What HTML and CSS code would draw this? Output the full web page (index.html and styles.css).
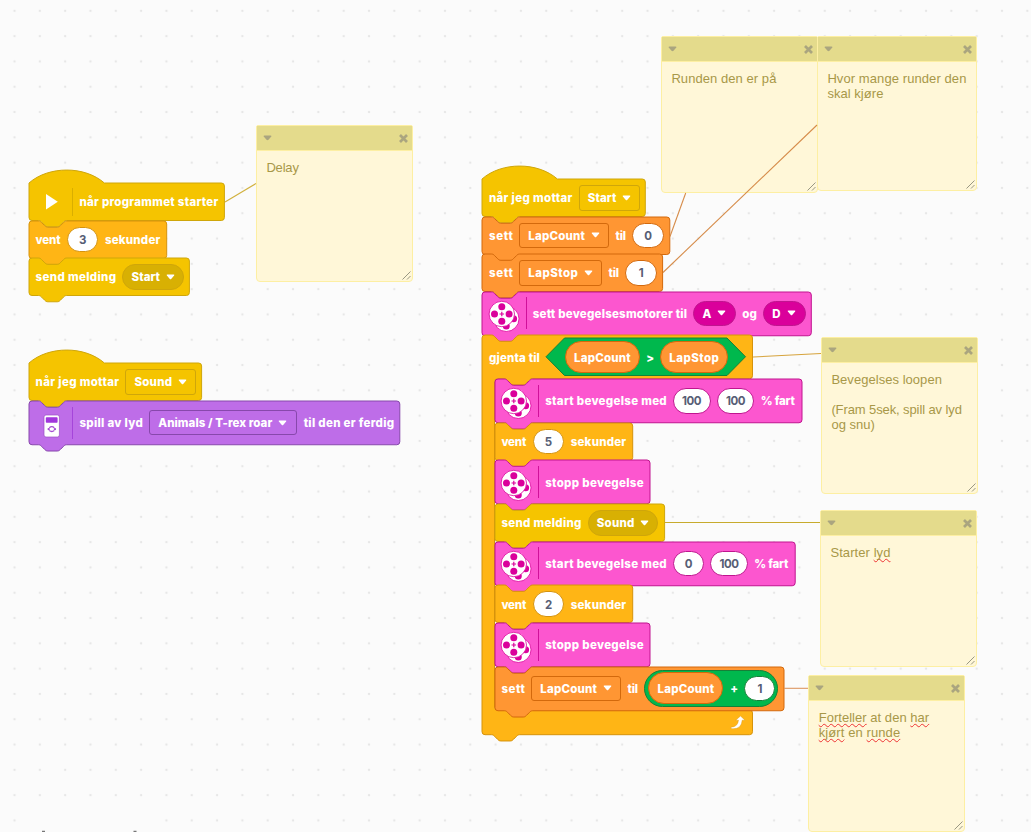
FILE: index.html
```html
<!DOCTYPE html>
<html lang="no">
<head>
<meta charset="utf-8">
<title>Word Blocks</title>
<link rel="stylesheet" href="styles.css">
</head>
<body>
<main class="workspace" id="workspace">
  <svg class="grid" width="1031" height="832">
    <defs>
      <pattern id="dots" width="25.32" height="25.3" patternUnits="userSpaceOnUse" x="1.84" y="-1.8">
        <path d="M11.6 12.65h2.2M12.7 11.55v2.2" stroke="#dedede" stroke-width=".9"/>
      </pattern>
    </defs>
    <rect width="1031" height="832" fill="url(#dots)"/>
    <rect x="30" y="812" width="118" height="20" fill="#fbfbfb"/>
    <path d="M42 831.5h3M133.500 831.5h3" stroke="#777" stroke-width="1.500"/>
  </svg>
</main>
<script src="blocks.js"></script>
</body>
</html>
```
FILE: styles.css
```css
body { margin: 0; background: #fbfbfb; overflow: hidden; }
.workspace { position: relative; width: 1031px; height: 832px; overflow: hidden; font-family: Inter, "Noto Sans", sans-serif; }
.grid, .wires { position: absolute; left: 0; top: 0; }
.wires { z-index: 3; fill: none; stroke-width: 1.1; }
.stack { position: absolute; z-index: 2; display: flex; flex-direction: column; align-items: flex-start; }
.block { position: relative; display: flex; align-items: center; gap: 6.4px; height: 37.5px; padding-left: 6.8px; box-sizing: border-box; color: #fff; white-space: nowrap; }
.block.tall { height: 43.75px; }
.outline { position: absolute; left: 0; top: 0; width: 1px; height: 1px; overflow: visible; stroke-width: 1; }
.loop { position: relative; }
.loop-body { padding-left: 12.500px; display: flex; flex-direction: column; align-items: flex-start; }
.loop-foot { display: flex; height: 24.7px; width: 270.5px; box-sizing: border-box; padding: 6px 6.500px 0 0; justify-content: flex-end; position: relative; }

.events { --fill: #f5c400; --edge: #cfa60a; --dark: #d8b003; --sep: #d9ae00; }
.control { --fill: #ffb515; --edge: #d6930c; }
.variables { --fill: #ff9633; --edge: #d3690c; }
.movement { --fill: #fc56cf; --edge: #c0158f; --dark: #da009b; --sep: #d0109a; }
.sound { --fill: #be6de8; --edge: #8748ac; --sep: #a545da; }
.operators { --fill: #00b84d; --edge: #168038; }
.outline path { fill: var(--fill); stroke: var(--edge); }

.label { flex: none; position: relative; font-size: 11.5px; font-weight: 800; line-height: 16px; padding-top: 1px; text-align: left; }
.icon { flex: none; position: relative; width: 31px; height: 31px; overflow: visible; }
.sep { flex: none; position: relative; width: 1px; height: 32px; margin-right: -.5px; margin-left: -.5px; background: var(--sep); }
.hat .sep { height: 28px; }
.input, .drop, .reporter, .menu { flex: none; position: relative; box-sizing: border-box; display: flex; align-items: center; height: 25.500px; border: 1px solid var(--edge); }
.input { justify-content: center; background: #fff; border-radius: 13px; color: #575e75; }
.input .label { font-weight: 700; }
.drop { border-radius: 3px; padding-left: 8px; gap: 6px; }
.menu { border-radius: 13px; padding-left: 8px; gap: 6px; background: var(--dark); }
.reporter { height: 32px; border-radius: 16px; background: var(--fill); justify-content: center; }
.caret { width: 9px; height: 6px; flex: none; }
.compare { position: relative; flex: none; box-sizing: border-box; display: flex; align-items: center; gap: 6.500px; width: 199.500px; height: 37.500px; padding-left: 18.500px; }
.sum { position: relative; flex: none; box-sizing: border-box; display: flex; align-items: center; gap: 7px; width: 133.500px; height: 37.500px; padding-left: 3px; border: 1px solid var(--edge); border-radius: 19px; background: var(--fill); }

.note { position: absolute; z-index: 1; box-sizing: border-box; display: flex; flex-direction: column; border: 1px solid #fdefa3; border-radius: 2px 2px 4px 4px; background: #fff7d8; }
.note-bar { display: flex; align-items: center; justify-content: space-between; height: 24px; padding: 0 4px 0 6px; background: #e4db8c; border-bottom: 1px solid #fdefa3; }
.note-text { margin: 0; padding: 9px 9.400px; font: 13px/15px "Liberation Sans", Arial, sans-serif; color: #a89848; white-space: pre; }
.note-text span { display: inline-block; height: 15px; }
.typo { text-decoration: underline wavy #e33 1px; text-underline-offset: 1px; text-decoration-skip-ink: none; }
.grip { position: absolute; right: 1px; bottom: 1px; width: 9px; height: 9px; }
```
FILE: blocks.js
```js
const K = 0.785; // zoom level of the workspace
const INDENT = 12.5;
const notchR = `c${[2,0,3,1,4,2].map(n => n*K)}l${4*K},${4*K}c${[1,1,2,2,4,2].map(n => n*K)}h${12*K}c${[2,0,3,-1,4,-2].map(n => n*K)}l${4*K},${-4*K}c${[1,-1,2,-2,4,-2].map(n => n*K)}`;
const notchL = `c${[-2,0,-3,1,-4,2].map(n => n*K)}l${-4*K},${4*K}c${[-1,1,-2,2,-4,2].map(n => n*K)}h${-12*K}c${[-2,0,-3,-1,-4,-2].map(n => n*K)}l${-4*K},${-4*K}c${[-1,-1,-2,-2,-4,-2].map(n => n*K)}`;
const R = 3, N = 12 * K, E = 48 * K;

function outline(w, h, hat) {
  const top = hat
    ? `M0,0c${25*K},${-22*K} ${71*K},${-22*K} ${96*K},0H${w-R}`
    : `M0,${R}Q0,0 ${R},0H${N}${notchR}H${w-R}`;
  return `<svg class="outline"><path d="${top}Q${w},0 ${w},${R}V${h-R}Q${w},${h} ${w-R},${h}H${E}${notchL}H${R}Q0,${h} 0,${h-R}Z"/></svg>`;
}
function loopOutline(w, head, inner, foot) {
  const b = head + inner, t = b + foot, i = INDENT;
  return `<svg class="outline"><path d="M0,${R}Q0,0 ${R},0H${N}${notchR}H${w-R}Q${w},0 ${w},${R}V${head-R}Q${w},${head} ${w-R},${head}H${i+E}${notchL}H${i+R}Q${i},${head} ${i},${head+R}V${b-R}Q${i},${b} ${i+R},${b}H${w-R}Q${w},${b} ${w},${b+R}V${t-R}Q${w},${t} ${w-R},${t}H${E}${notchL}H${R}Q0,${t} 0,${t-R}Z"/></svg>`;
}

const L = (text, w) => `<span class="label" data-w="${w}" style="width:${w}px">${text}</span>`;
const caret = '<svg class="caret" viewBox="0 0 9 6"><path d="M1.300 .5h6.400q1 0 .4.900L5.200 5q-.7.700-1.400 0L.9 1.400Q.3.500 1.300.500Z" fill="#fff"/></svg>';
const drop = (text, tw, w) => `<div class="drop" style="width:${w}px">${L(text, tw)}${caret}</div>`;
const menu = (text, tw, w) => `<div class="menu" style="width:${w}px">${L(text, tw)}${caret}</div>`;
const input = (text, tw, w) => `<div class="input" style="width:${w}px">${L(text, tw)}</div>`;
const reporter = (text, tw, w) => `<div class="reporter variables" style="width:${w}px">${L(text, tw)}</div>`;
const sep = '<i class="sep"></i>';

const wheel = (x, y) => `<circle cx="${x}" cy="${y}" r="12.700" fill="#fff" stroke="#da009b" stroke-width=".8"/><g fill="#da009b"><circle cx="${x}" cy="${y-7.3}" r="3.500"/><circle cx="${x}" cy="${y+7.3}" r="3.500"/><circle cx="${x-7.3}" cy="${y}" r="3.500"/><circle cx="${x+7.3}" cy="${y}" r="3.500"/></g><path d="M${x-2.3} ${y}h4.600M${x} ${y-2.3}v4.600" stroke="#da009b" stroke-width="1.200"/>`;
const motor = `<svg class="icon" viewBox="0 0 31 31">${wheel(17.3, 20.8)}${wheel(12.8, 16)}</svg>${sep}`;
const play = `<svg class="icon" viewBox="0 0 31 31"><path d="M10 8v15.500L21.800 15.700Z" fill="#fff"/></svg>${sep}`;
const hub = `<svg class="icon" viewBox="0 0 31 31"><rect x="8" y="8" width="15.400" height="22" rx="2" fill="#fff" stroke="#9b4fc4" stroke-width=".7"/><rect x="9.800" y="10.200" width="11.800" height="5.600" rx=".8" fill="#a136dc"/><g fill="none" stroke="#a44bd2" stroke-width="1.300"><path d="M13.300 20.700q2.500-2 5 0M13.300 23.500q2.500 2 5 0"/></g><circle cx="12.700" cy="22.100" r="1.200" fill="#a44bd2"/><circle cx="18.900" cy="22.100" r="1.200" fill="#a44bd2"/></svg>${sep}`;

function block(kind, w, parts, opt = '') {
  const h = opt.includes('tall') ? 43.75 : 37.5;
  return `<div class="block ${kind} ${opt}" style="width:${w}px">${outline(w, h, opt.includes('hat'))}${parts.join('')}</div>`;
}
const stack = (x, y, html) => `<section class="stack" style="left:${x}px;top:${y}px">${html}</section>`;
const wait = n => block('control', 137.7, [L('vent', 25), input(n, 7.5, 31.5), L('sekunder', 55.5)]);
const stop = () => block('movement', 155, [motor, L('stopp bevegelse', 98.5)], 'tall');

const first = stack(28.8, 183,
  block('events', 195.4, [play, L('når programmet starter', 139)], 'hat') +
  wait('3') +
  block('events', 160.4, [L('send melding', 80.500), menu('Start', 28.5, 61.5)]));

const second = stack(28.8, 363.2,
  block('events', 172.6, [L('når jeg mottar', 83.5), drop('Sound', 37.5, 71)], 'hat') +
  block('sound', 370.8, [hub, L('spill av lyd', 63.5), drop('Animals / T-rex roar', 114, 148), L('til den er ferdig', 90.5)], 'tall'));

const compare = `<div class="compare operators"><svg class="outline"><path d="M0,18.750 18.500,0H181L199.500,18.750 181,37.500H18.500Z"/></svg>${reporter('LapCount', 56.5, 75)}${L('&gt;', 7)}${reporter('LapStop', 49.5, 68.5)}</div>`;
const sum = `<div class="sum operators">${reporter('LapCount', 56.5, 75)}${L('+', 7)}${input('1', 5, 31)}</div>`;

const children =
  block('movement', 307, [motor, L('start bevegelse med', 121.5), input('100', 19.5, 37.5), input('100', 19.5, 37.5), L('% fart', 34)], 'tall') +
  wait('5') + stop() +
  block('events', 169.6, [L('send melding', 80), menu('Sound', 37.5, 70.5)]) +
  block('movement', 300.2, [motor, L('start bevegelse med', 121.5), input('0', 7.5, 31), input('100', 19.5, 37.5), L('% fart', 34)], 'tall') +
  wait('2') + stop() +
  block('variables', 289, [L('sett', 23.5), drop('LapCount', 56.5, 89.8), L('til', 10.5), sum], 'tall');
const inner = 43.75 * 5 + 37.5 * 3;

const loop = `<div class="loop control">${loopOutline(270.5, 43.75, inner, 24.7)}
  <div class="block tall">${L('gjenta til', 51)}${compare}</div>
  <div class="loop-body">${children}</div>
  <div class="loop-foot"><svg width="16" height="13" viewBox="0 0 16 13"><path d="M1 11.200q6.800-.2 7.500-7H5.700L10.500 0 15 4.200h-2.800q-.6 8.600-9.200 8.600-2.700 0-2-1.600Z" fill="#fff" stroke="#d6930c" stroke-width=".4"/></svg></div>
</div>`;

const third = stack(482.1, 179,
  block('events', 163.3, [L('når jeg mottar', 83.5), drop('Start', 28.5, 61.5)], 'hat') +
  block('variables', 187.8, [L('sett', 24), drop('LapCount', 56.5, 89.8), L('til', 10.5), input('0', 7.5, 31.5)]) +
  block('variables', 180.6, [L('sett', 24), drop('LapStop', 49.5, 82.8), L('til', 10.5), input('1', 5, 31.5)]) +
  block('movement', 329.3, [motor, L('sett bevegelsesmotorer til', 154.4), menu('A', 8.5, 42.5), L('og', 14.4), menu('D', 8.5, 42.5)], 'tall') +
  loop);

const note = (x, y, w, h, text) => `<aside class="note" style="left:${x}px;top:${y}px;width:${w}px;height:${h}px">
  <header class="note-bar"><svg width="9" height="6" viewBox="0 0 9 6"><path d="M.5 1.200Q.5.500 1.500.500h6q1 0 1 .7L5.500 4.800q-1 .8-2 0Z" fill="#aaa57f"/></svg>
  <svg width="9" height="9" viewBox="0 0 9 9"><path d="M1 1 8 8M8 1 1 8" stroke="#aaa57f" stroke-width="2.700"/></svg></header>
  <p class="note-text">${text}</p>
  <svg class="grip" viewBox="0 0 9 9"><path d="M.5 8.500l8-8M5 8.500l3.500-3.500" stroke="#999782" stroke-width="1"/></svg></aside>`;
const T = (t, w) => `<span data-w="${w}">${t}</span>`;
const typo = t => `<u class="typo">${t}</u>`;

const notes =
  note(256, 125.3, 156.7, 156.5, T('Delay', 32.5)) +
  note(661, 36, 157, 156.5, T('Runden den er på', 105)) +
  note(817, 36, 160, 154.5, T('Hvor mange runder den', 139) + '\n' + T('skal kjøre', 56)) +
  note(821, 337.3, 157, 156.5, T('Bevegelses loopen', 110.5) + '\n\n' + T('(Fram 5sek, spill av lyd', 130.5) + '\n' + T('og snu)', 43.5)) +
  note(820, 510, 157, 156.5, T('Starter ' + typo('lyd'), 60)) +
  note(808.3, 675.3, 157, 156.5, T(typo('Forteller') + ' at den ' + typo('har'), 110.5) + '\n' + T(typo('kjørt') + ' en ' + typo('runde'), 81.5));

const wires = `<svg class="wires" width="1031" height="832">
  <path d="M225 202 256 183.500" stroke="#d1b13e"/>
  <path d="M670 236.500 685.700 193" stroke="#d68c4a"/>
  <path d="M663 272.500 817 125" stroke="#d68c4a"/>
  <path d="M753 357 821 353.500" stroke="#d6a33c"/>
  <path d="M665 522.500H820" stroke="#c7ab2d"/>
  <path d="M784 688.300H808" stroke="#dc9560"/>
</svg>`;

const ws = document.getElementById('workspace');
ws.insertAdjacentHTML('beforeend', notes + first + second + third + wires);

// Track each label so that it fills the width its block reserves for it.
const range = document.createRange();
document.querySelectorAll('[data-w]').forEach(el => {
  range.selectNodeContents(el);
  const n = el.textContent.length;
  const natural = range.getBoundingClientRect().width;
  if (n > 1) el.style.letterSpacing = (el.dataset.w - natural) / (n - 1) + 'px';
  else el.style.textAlign = 'center';
});
```
